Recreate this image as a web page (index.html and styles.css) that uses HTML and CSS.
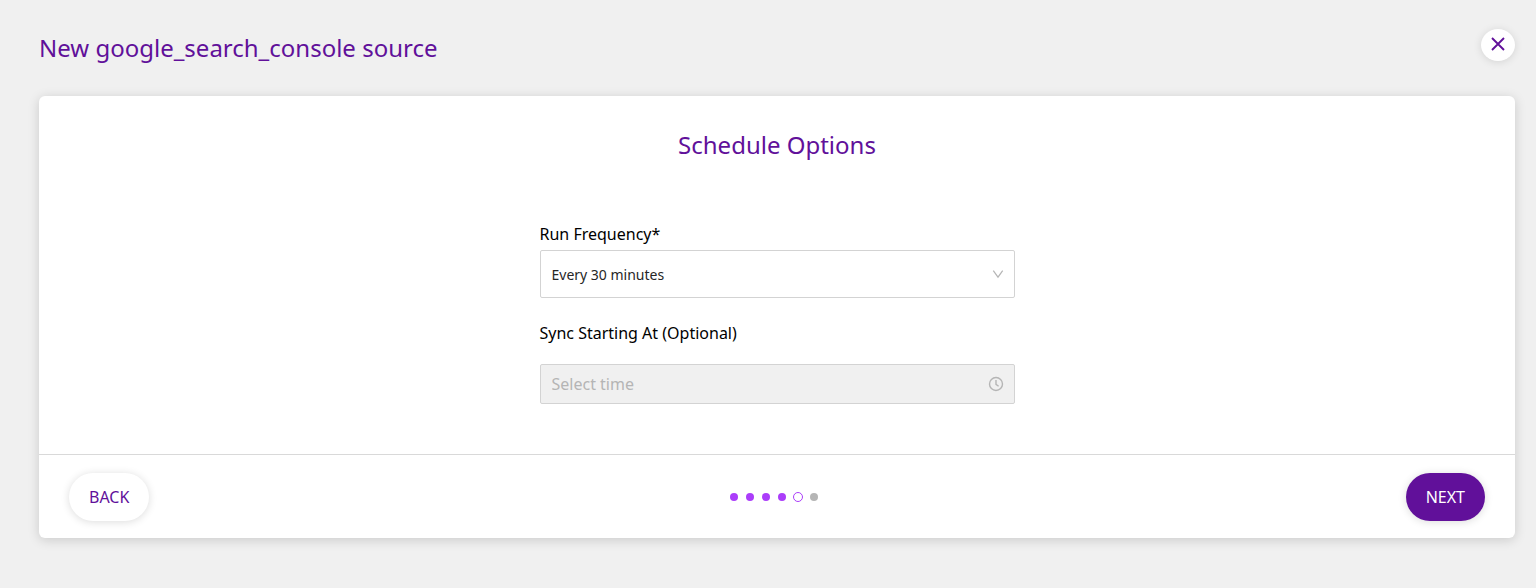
FILE: index.html
```html
<!DOCTYPE html>
<html lang="en">
<head>
<meta charset="utf-8">
<meta name="viewport" content="width=device-width, initial-scale=1">
<title>New google_search_console source</title>
<link rel="stylesheet" href="styles.css">
</head>
<body>
<main class="page">
  <header class="page-header">
    <h1 class="title">New google_search_console source</h1>
    <button class="close" type="button" aria-label="Close">
      <svg width="14" height="14" viewBox="0 0 14 14" fill="none" stroke="currentColor" stroke-width="1.900" aria-hidden="true"><path d="M1 1l12 12M13 1L1 13"/></svg>
    </button>
  </header>
  <form class="card">
    <div class="card-body">
      <h2 class="title">Schedule Options</h2>
      <div class="fields">
        <label class="label" for="frequency">Run Frequency*</label>
        <div class="control">
          <select class="input select" id="frequency">
            <option>Every 30 minutes</option>
          </select>
          <svg class="control-icon" width="12" height="12" viewBox="0 0 12 12" fill="none" stroke="currentColor" stroke-width="1.200" aria-hidden="true"><path d="M1.300 2.700L6 9.200 10.700 2.700"/></svg>
        </div>
        <label class="label label-time" for="start">Sync Starting At (Optional)</label>
        <div class="control">
          <input class="input time" id="start" type="text" placeholder="Select time" disabled>
          <svg class="control-icon" width="16" height="16" viewBox="0 0 16 16" fill="none" stroke="currentColor" stroke-width="1.400" aria-hidden="true"><circle cx="8" cy="8" r="6.500"/><path d="M8 4V8.400L10.600 10.300"/></svg>
        </div>
      </div>
    </div>
    <footer class="card-footer">
      <button class="button back" type="button">BACK</button>
      <ol class="steps" aria-label="Step 5 of 6">
        <li class="step done"></li>
        <li class="step done"></li>
        <li class="step done"></li>
        <li class="step done"></li>
        <li class="step current"></li>
        <li class="step"></li>
      </ol>
      <button class="button next" type="button">NEXT</button>
    </footer>
  </form>
</main>
</body>
</html>
```

FILE: styles.css
```css
* {
  box-sizing: border-box;
}

body {
  margin: 0;
  background: #f0f0f0;
  color: #000;
  font: 16px/24px "Noto Sans", sans-serif;
}

button,
input,
select {
  font: inherit;
}

.page {
  padding: 29px 21px 50px 39px;
}

.page-header {
  display: flex;
  justify-content: space-between;
  align-items: flex-start;
  margin-bottom: 29px;
}

.title {
  margin: 0;
  color: #61109a;
  font-size: 24px;
  font-weight: 400;
  line-height: 38px;
}

.close {
  display: grid;
  place-items: center;
  width: 34px;
  height: 32px;
  padding: 0 0 2px;
  border: 0;
  border-radius: 50%;
  background: #fff;
  color: #61109a;
  box-shadow: 0 1px 8px rgba(0, 0, 0, 0.12);
}

.card {
  border-radius: 6px;
  background: #fff;
  box-shadow: 0 2px 12px rgba(0, 0, 0, 0.16);
}

.card-body {
  display: flex;
  flex-direction: column;
  align-items: center;
  gap: 58px;
  padding: 30px 30px 50px;
}

.fields {
  display: flex;
  flex-direction: column;
  width: 100%;
  max-width: 475px;
}

.label {
  margin-bottom: 4px;
}

.label-time {
  margin: 23px 0 19px;
}

.control {
  display: grid;
  align-items: center;
}

.input,
.control-icon {
  grid-area: 1 / 1;
}

.input {
  width: 100%;
  padding: 0 11px;
  border: 1px solid #d3d3d3;
  border-radius: 2px;
  background: #fff;
}

.select {
  height: 48px;
  padding-top: 2px;
  appearance: none;
  color: #262626;
  font-size: 14px;
}

.time {
  height: 40px;
  background: #f0f0f0;
}

.time::placeholder {
  color: #b5b5b5;
}

.control-icon {
  justify-self: end;
  margin-right: 11px;
  color: #b5b5b5;
  pointer-events: none;
}

.card-footer {
  display: flex;
  justify-content: space-between;
  align-items: center;
  padding: 18px 30px 17px;
  border-top: 1px solid #d9d9d9;
}

.button {
  height: 48px;
  padding: 0 20px;
  border: 0;
  border-radius: 24px;
  box-shadow: 0 1px 8px rgba(0, 0, 0, 0.14);
}

.back {
  background: #fff;
  color: #61109a;
}

.next {
  background: #61109a;
  color: #fff;
}

.steps {
  display: flex;
  align-items: center;
  margin: 0;
  padding: 0;
  list-style: none;
}

.step {
  width: 8px;
  height: 8px;
  margin-right: 8px;
  border-radius: 50%;
  background: #b5b5b5;
}

.done {
  background: #ab3dfa;
}

.current {
  width: 10px;
  height: 10px;
  margin: 0 7px 0 -1px;
  border: 1px solid #ab3dfa;
  background: #fff;
}
```
